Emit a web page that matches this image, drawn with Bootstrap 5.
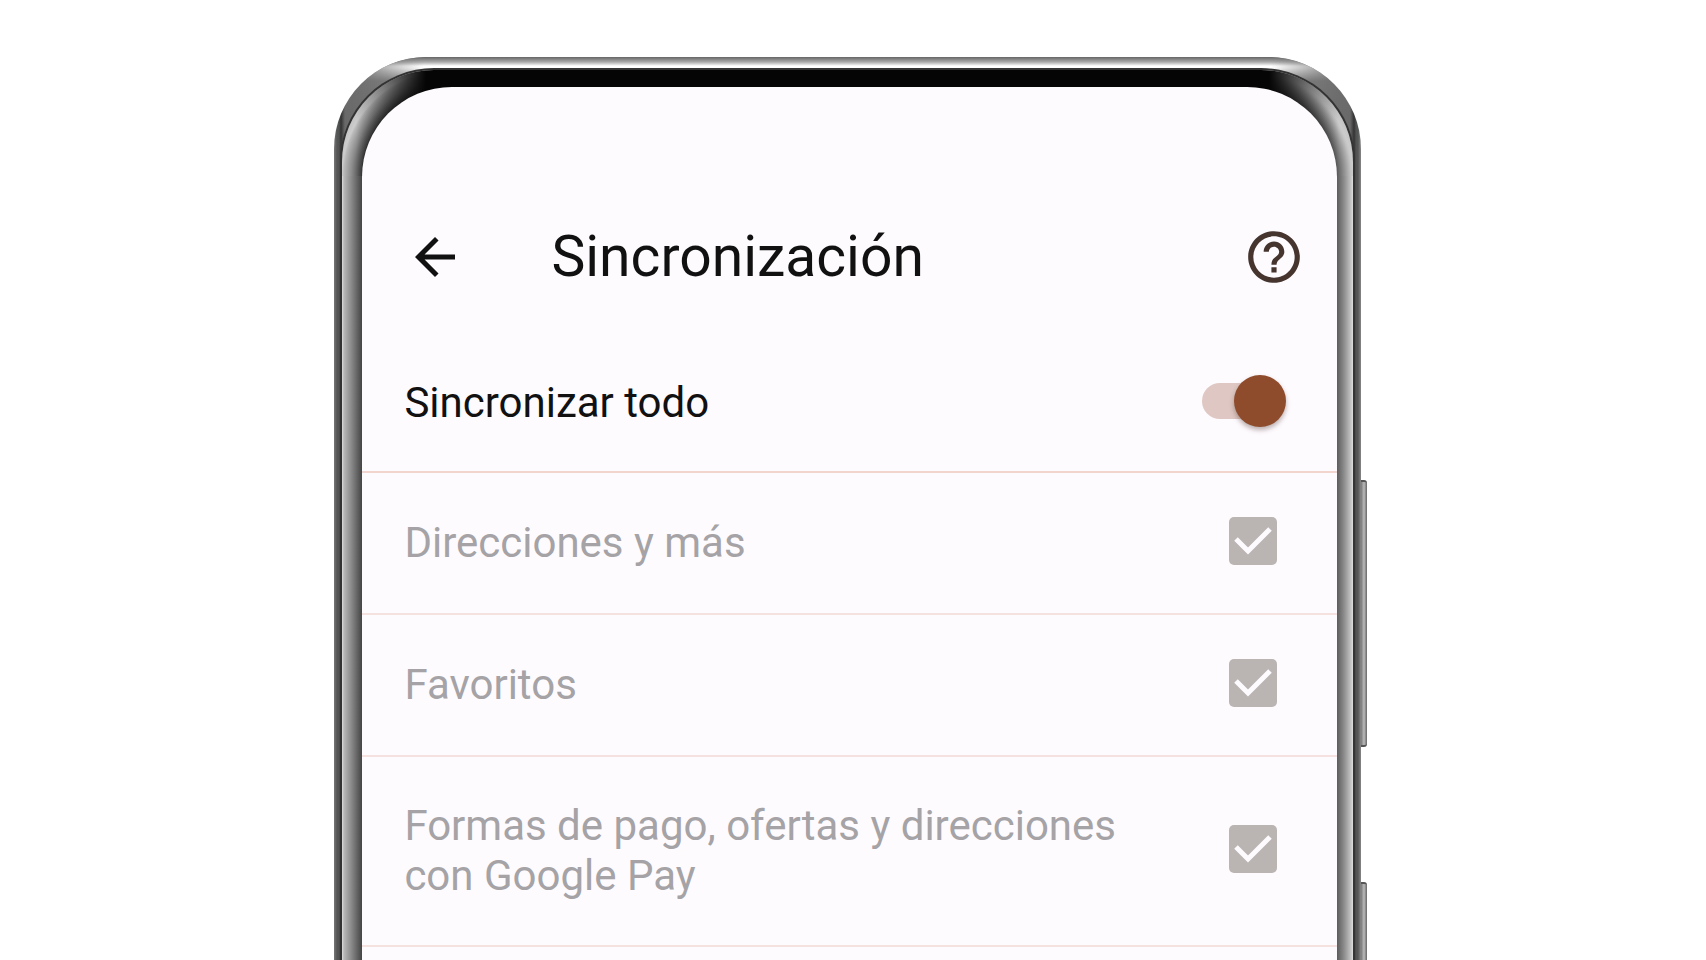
<!DOCTYPE html>
<html lang="es">
<head>
<meta charset="utf-8">
<meta name="viewport" content="width=device-width, initial-scale=1">
<title>Sincronización</title>
<link href="https://cdn.jsdelivr.net/npm/bootstrap@5.3.0/dist/css/bootstrap.min.css" rel="stylesheet">
<style>
  body { font-family: Roboto, "Noto Sans", sans-serif; background: #fff; }
  .stage { height: 100vh; overflow: hidden; padding-top: 57px; }

  /* Phone body: metal rim, bezel, screen */
  .phone { width: 60.2%; margin-left: 19.6%; }
  .rim {
    padding: 13px 8px 0;
    border-radius: 92px 92px 0 0;
    background: linear-gradient(to right, #777 0, #555 3px, #505253 5px, #333 7px, #6a6a6a 11px, #777 50%, #6a6a6a calc(100% - 11px), #333 calc(100% - 7px), #505253 calc(100% - 5px), #555 calc(100% - 3px), #888 100%);
  }
  .rim::before {
    content: ""; position: absolute; inset: 0 0 auto; height: 100px;
    border-radius: 92px 92px 0 0;
    background: linear-gradient(#666 0, #aaa 5px, #fff 9px, #fff 11px, #888 24px, #666 70px);
    -webkit-mask-image: linear-gradient(to right, transparent 10px, #000 90px, #000 calc(100% - 90px), transparent calc(100% - 10px));
    mask-image: linear-gradient(to right, transparent 10px, #000 90px, #000 calc(100% - 90px), transparent calc(100% - 10px));
  }
  .bezel {
    padding: 17px 16px 0 20px;
    border-radius: 92px 92px 0 0;
    box-shadow: 0 0 0 2px #333;
    background:
      linear-gradient(to right, transparent 14px, #050505 84px, #050505 calc(100% - 84px), transparent calc(100% - 14px)) top / 100% 106px no-repeat,
      radial-gradient(105px 106px at 105px 106px, #050505 78%, #444 82%, #8c8c8c 91%, #b8b8b8 98%, #ccc 100%, #bbb 110%) left top / 105px 106px no-repeat,
      radial-gradient(105px 106px at 0 106px, #050505 78%, #555 84%, #8c8c8c 91%, #c4c4c4 98%, #ccc 100%, #bbb 110%) right top / 105px 106px no-repeat,
      linear-gradient(to right, #ddd 0, #b8b8b8 2px, #8c8c8c 9px, #444 20px, #555 calc(100% - 17px), #8c8c8c calc(100% - 9px), #c4c4c4 calc(100% - 2px), #ddd 100%);
  }
  .screen { background: #fefbff; border-radius: 90px 90px 0 0; color: #111; }
  .side-key {
    position: absolute; left: 100%; width: 6px;
    background: linear-gradient(to right, #777, #bbb 50%, #666);
    border: solid #555; border-width: 2px 0; border-radius: 0 3px 3px 0;
  }
  .volume { top: 423px; height: 267px; }
  .power { top: 825px; height: 180px; }

  /* Screen content */
  .app-header { padding: 104px 32px 0 43px; height: 236px; }
  .app-header h1 { font-size: 57px; line-height: 72px; margin: 0 0 0 86px; font-weight: 400; }
  .icon-btn { color: #111; line-height: 0; }
  .help { color: #45352e; }
  .setting {
    padding: 45px 60px 44px 42px;
    border-bottom: 2px solid #f5e2e0;
    font-size: 42px; line-height: 50px;
  }
  .setting-main { padding: 52px 51px 40px 42px; border-color: #f3d5d0; }
  .setting-off label { color: #a5a3a6; padding-right: 90px; }
  .tick, .toggle { appearance: none; -webkit-appearance: none; margin: 0; flex: none; }
  .tick {
    width: 48px; height: 48px; border-radius: 5px; background: #bab5b3; margin-bottom: 4px;
    background-image: url("data:image/svg+xml,%3Csvg xmlns='http://www.w3.org/2000/svg' viewBox='0 0 48 48'%3E%3Cpath d='M7 22L19 34L41 12' fill='none' stroke='%23fefbff' stroke-width='5'/%3E%3C/svg%3E");
  }
  .setting-off { min-height: 141px; padding-top: 44px; }
  .toggle { width: 84px; height: 52px; position: relative; margin-bottom: 4px; }
  .toggle::before { content: ""; position: absolute; inset: 8px 12px 8px 0; border-radius: 18px; background: #dfc8c3; }
  .toggle::after { content: ""; position: absolute; inset: 0 0 0 auto; width: 52px; border-radius: 50%; background: #8f4c2d; box-shadow: 0 3px 5px rgba(60, 30, 20, .35); }
</style>
</head>
<body>
<div class="stage d-flex flex-column">
  <div class="phone position-relative flex-grow-1 d-flex flex-column">
    <div class="rim position-relative flex-grow-1 d-flex flex-column">
      <div class="bezel position-relative flex-grow-1 d-flex flex-column">
        <main class="screen flex-grow-1">
          <header class="app-header d-flex align-items-center">
            <button type="button" class="btn p-0 border-0 icon-btn" aria-label="Atrás">
              <svg width="60" height="60" viewBox="0 0 24 24" fill="currentColor"><path d="M20 11H7.830l5.590-5.590L12 4l-8 8 8 8 1.410-1.410L7.830 13H20z"/></svg>
            </button>
            <h1>Sincronización</h1>
            <button type="button" class="btn p-0 border-0 icon-btn help ms-auto" aria-label="Ayuda">
              <svg width="62" height="62" viewBox="0 0 24 24" fill="currentColor"><path d="M11 18h2v-2h-2v2zm1-16C6.480 2 2 6.480 2 12s4.480 10 10 10 10-4.480 10-10S17.520 2 12 2zm0 18c-4.410 0-8-3.590-8-8s3.590-8 8-8 8 3.590 8 8-3.590 8-8 8zm0-14c-2.210 0-4 1.790-4 4h2c0-1.100.9-2 2-2s2 .9 2 2c0 2-3 1.750-3 5h2c0-2.250 3-2.500 3-5 0-2.210-1.790-4-4-4z"/></svg>
            </button>
          </header>
          <div class="setting setting-main d-flex align-items-center justify-content-between">
            <label for="all">Sincronizar todo</label>
            <input class="toggle" type="checkbox" role="switch" id="all" checked>
          </div>
          <div class="setting setting-off d-flex align-items-center justify-content-between">
            <label for="addresses">Direcciones y más</label>
            <input class="tick" type="checkbox" id="addresses" checked disabled>
          </div>
          <div class="setting setting-off d-flex align-items-center justify-content-between">
            <label for="bookmarks">Favoritos</label>
            <input class="tick" type="checkbox" id="bookmarks" checked disabled>
          </div>
          <div class="setting setting-off d-flex align-items-center justify-content-between">
            <label for="payments">Formas de pago, ofertas y direcciones con Google Pay</label>
            <input class="tick" type="checkbox" id="payments" checked disabled>
          </div>
        </main>
      </div>
    </div>
    <span class="side-key volume"></span>
    <span class="side-key power"></span>
  </div>
</div>
<script src="https://cdn.jsdelivr.net/npm/bootstrap@5.3.0/dist/js/bootstrap.bundle.min.js"></script>
</body>
</html>
